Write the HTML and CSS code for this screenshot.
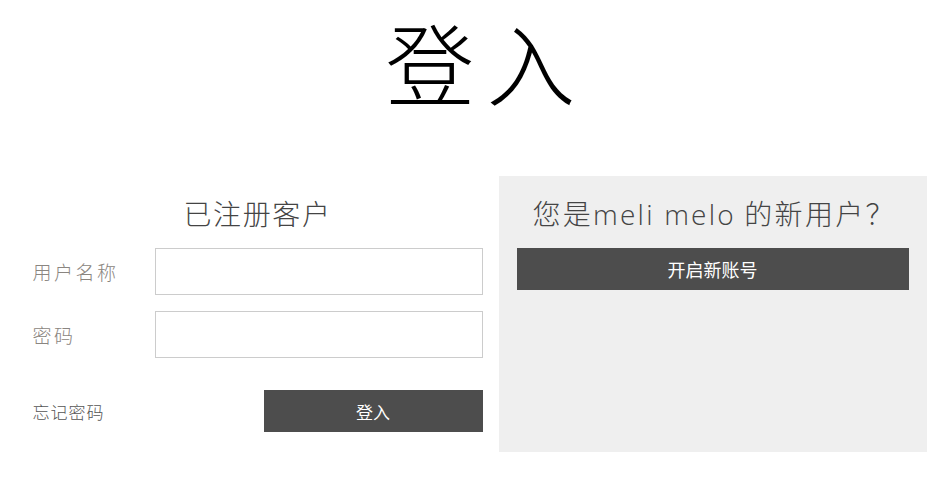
FILE: index.html
```html
<!DOCTYPE html>
<html lang="zh">
	<head>
		<meta charset="UTF-8" />
		<title>登入</title>
		<link rel="stylesheet" href="styles.css">
	</head>
	<body>
		<h1 class="page-title">登入</h1>

		<div class="account">
			<div class="login-box">
				<h2>已注册客户</h2>
				<form class="login-form">
					<div class="row">
						<label>用户名称</label>
						<input type="text" name="username" />
					</div>
					<div class="row">
						<label>密码</label>
						<input type="password" name="password" />
					</div>
					<div class="row actions">
						<a href="#" class="forgot">忘记密码</a>
						<button type="submit">登入</button>
					</div>
				</form>
			</div>

			<div class="register-box">
				<h2>您是<span class="brand">meli melo</span> 的新用户？</h2>
				<button type="button" class="wide">开启新账号</button>
			</div>
		</div>
	</body>
</html>
```

FILE: styles.css
```css
* {
	box-sizing: border-box;
	margin: 0;
	padding: 0;
}

body {
	font-family: "Noto Sans CJK SC", "Noto Sans", sans-serif;
	background: #fff;
	color: #333;
}

.page-title {
	padding: 16px 0 0 30px;
	height: 122px;
	line-height: 89px;
	text-align: center;
	font-size: 89px;
	font-weight: 300;
	letter-spacing: 12px;
	color: #000;
}

.account {
	width: 910px;
	margin: 54px auto 0;
	display: grid;
	grid-template-columns: 482px 428px;
}

.login-box {
	padding: 19px 16px 20px;
}

.register-box {
	background: #efefef;
	padding: 19px 18px 20px;
}

h2 {
	height: 36px;
	line-height: 36px;
	margin-bottom: 17px;
	font-size: 28px;
	font-weight: 300;
	letter-spacing: 1.6px;
	color: #444;
	white-space: nowrap;
}

.login-box h2 {
	text-align: center;
}

.register-box h2 {
	padding-left: 16px;
	letter-spacing: 2.3px;
}

.brand {
	font-family: "Open Sans", "Noto Sans", sans-serif;
	font-weight: 300;
	letter-spacing: 2.2px;
}

.login-form {
	display: flex;
	flex-direction: column;
	gap: 16px;
}

.row {
	display: flex;
	align-items: center;
}

.row label {
	width: 122px;
	font-size: 19px;
	font-weight: 300;
	color: #8a8580;
	letter-spacing: 2.5px;
}

.row input {
	flex: 1;
	height: 47px;
	border: 1px solid #ccc;
	background: #fff;
	font-size: 16px;
	padding: 0 10px;
}

.actions {
	margin-top: 16px;
	justify-content: space-between;
}

.forgot {
	font-size: 17px;
	font-weight: 300;
	letter-spacing: 1px;
	color: #555;
	text-decoration: none;
}

button {
	height: 42px;
	background: #4d4d4d;
	color: #fff;
	border: none;
	font-family: inherit;
	font-size: 17px;
	cursor: pointer;
}

.actions button {
	width: 219px;
}

.wide {
	width: 100%;
	font-size: 18px;
}
```
